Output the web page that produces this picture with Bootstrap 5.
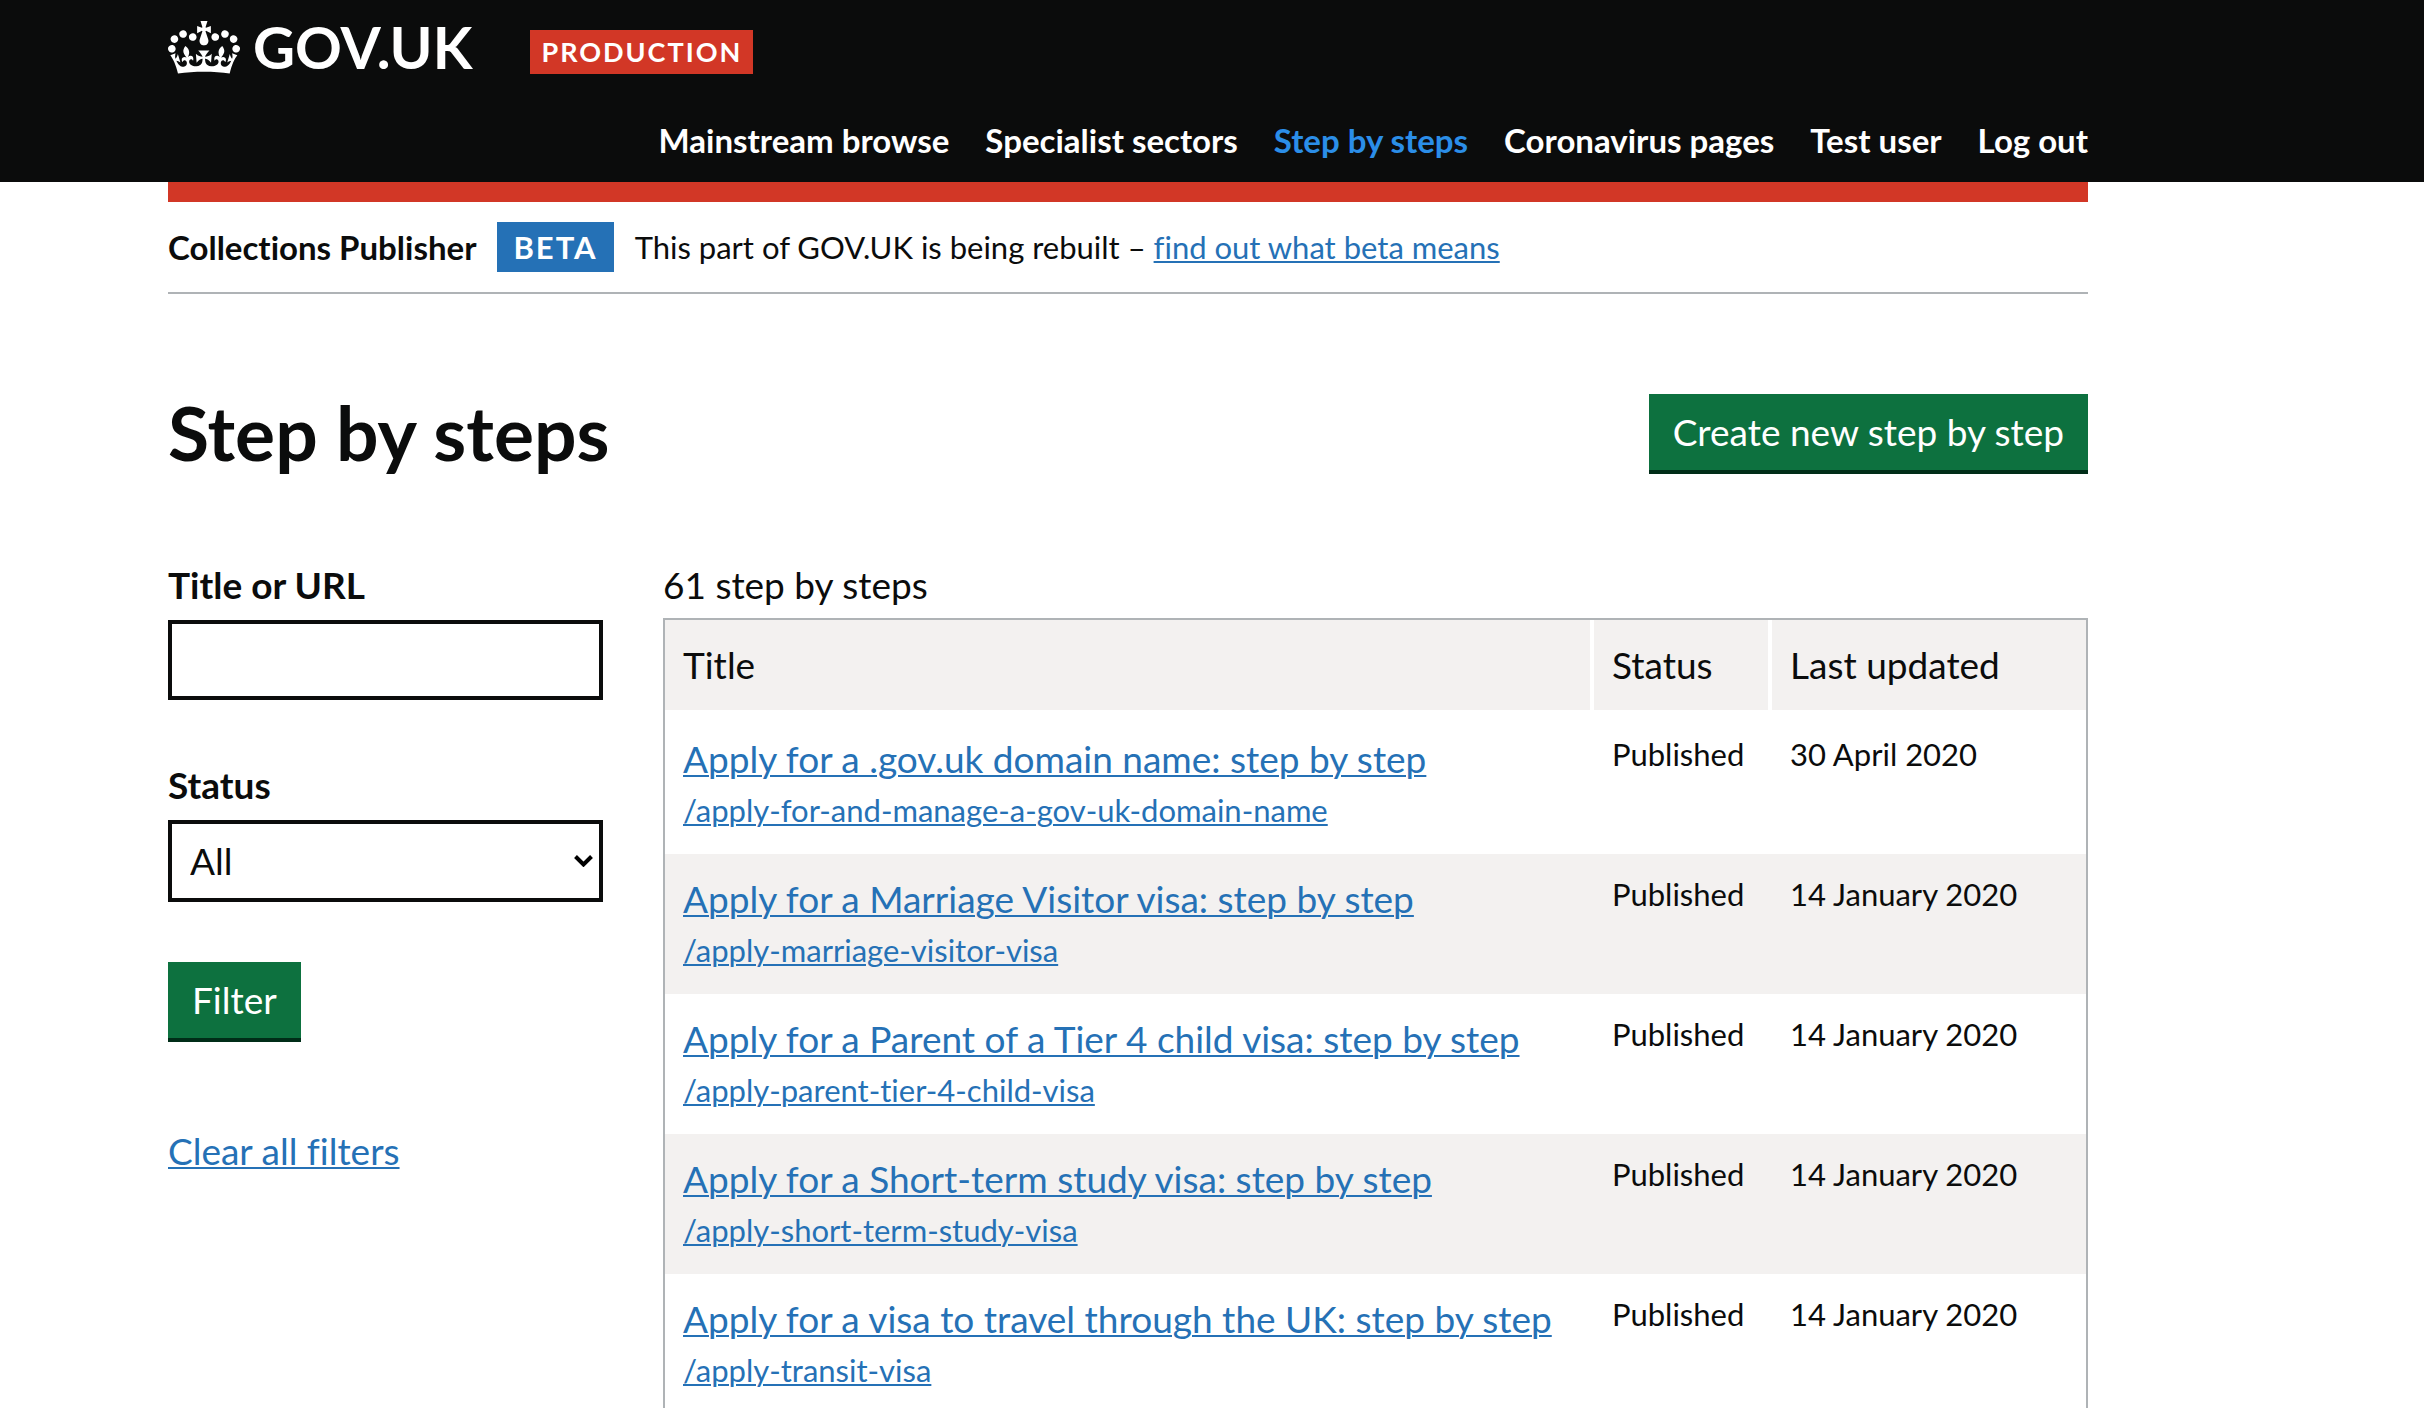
<!DOCTYPE html>
<html lang="en">
<head>
<meta charset="utf-8">
<meta name="viewport" content="width=device-width, initial-scale=1">
<title>Step by steps - Collections Publisher</title>
<link href="https://cdn.jsdelivr.net/npm/bootstrap@5.3.0/dist/css/bootstrap.min.css" rel="stylesheet">
<style>
:root { --ink: #0b0c0c; --link: #2571b6; --grey: #afb3b6; --pale: #f3f1f0; --red: #d23726; --green: #0d713f; }
body { font-family: Lato, "Liberation Sans", sans-serif; font-size: 37px; line-height: 50px; color: var(--ink); font-variant-ligatures: none; }
a { color: var(--link); text-underline-offset: 2px; text-decoration-thickness: 2px; }
.page-width { max-width: 1920px; margin-left: 168px; margin-right: 168px; }
.site-header { background: var(--ink); padding: 20px 0 22px; }
.site-brand { color: #fff; font-size: 58px; line-height: 54px; gap: 13px; }
.site-brand:hover { color: #fff; }
.crown { width: 72px; height: 53px; }
.env-tag { background: var(--red); font-size: 27px; line-height: 44px; letter-spacing: 2px; padding: 0 11px; margin-left: 58px; }
.site-nav { gap: 36px; font-size: 33px; line-height: 40px; margin-top: 46px; }
.site-nav .nav-link { padding: 0; color: #fff; }
.site-nav .nav-link.active { color: #2b8ee8; }
.red-bar { height: 20px; background: var(--red); }
.phase { border-bottom: 2px solid var(--grey); padding: 20px 0; font-size: 31px; line-height: 50px; gap: 21px; }
.phase-name { font-size: 33px; }
.phase-tag { background: var(--link); color: #fff; letter-spacing: 2px; padding: 0 16px; }
main { padding-top: 100px; }
h1 { font-size: 75px; line-height: 76px; }
.btn-go { --bs-btn-color: #fff; --bs-btn-bg: var(--green); --bs-btn-hover-color: #fff; --bs-btn-hover-bg: #005a30; font-size: 37px; line-height: 50px; padding: 13px 24px; border: 0; border-radius: 0; border-bottom: 4px solid #002d18; }
.results { padding-top: 86px; --bs-gutter-x: 60px; }
.group { margin-bottom: 60px; }
.group label { margin-bottom: 10px; }
.field { border: 4px solid var(--ink); border-radius: 0; font-size: 37px; line-height: 50px; padding: 11px 18px; color: var(--ink); }
.field-menu { padding: 12px 18px; background-position: right 6px center; background-size: 19px 12px; background-image: url("data:image/svg+xml,%3Csvg xmlns='http://www.w3.org/2000/svg' viewBox='0 0 19 12'%3E%3Cpath d='M1.5 1.5l8 8 8-8' fill='none' stroke='%23000' stroke-width='4'/%3E%3C/svg%3E"); }
.steps { border: 2px solid var(--grey); border-collapse: separate; border-spacing: 0; --bs-table-color: var(--ink); color: var(--ink); }
.steps caption { padding: 0 0 8px; color: var(--ink); }
.steps > :not(caption) > * > * { padding: 20px 18px; border: 0; box-shadow: none; }
.steps > tbody > tr > td { padding-bottom: 18px; }
.steps > tbody > tr:nth-child(even) > td { background: var(--pale); }
.steps > tbody > tr > td + td { padding-left: 22px; }
.steps > thead > tr > th { background: var(--pale); border-bottom: 4px solid #fff; }
.steps > thead > tr > th + th { border-left: 4px solid #fff; }
.steps a { display: block; width: fit-content; }
.minor { font-size: 31px; }
.steps a.minor { line-height: 52px; }
.steps td.minor { line-height: 40px; }
.col-state { width: 178px; }
.col-date { width: 318px; }
</style>
</head>
<body>
<header class="site-header">
  <div class="page-width">
    <div class="d-flex align-items-end">
      <a class="site-brand d-flex align-items-center fw-bold text-decoration-none" href="#">
        <svg class="crown" viewBox="0 0 132 97" aria-hidden="true"><path fill="currentColor" fill-rule="evenodd" d="M25 30.2c3.5 1.5 7.7-.2 9.1-3.7 1.5-3.6-.2-7.8-3.9-9.2-3.6-1.4-7.6.3-9.1 3.9-1.4 3.5.3 7.5 3.9 9zM9 39.5c3.6 1.5 7.8-.2 9.2-3.7 1.5-3.6-.2-7.8-3.9-9.1-3.6-1.5-7.6.2-9.1 3.8-1.4 3.5.3 7.5 3.8 9zM4.4 57.2c3.5 1.5 7.7-.2 9.1-3.8 1.5-3.6-.2-7.7-3.9-9.1-3.5-1.5-7.6.3-9.1 3.8-1.4 3.5.3 7.6 3.9 9.1zm38.3-21.4c3.5 1.5 7.7-.2 9.1-3.8 1.5-3.6-.2-7.7-3.9-9.1-3.6-1.5-7.6.3-9.1 3.8-1.3 3.6.4 7.7 3.9 9.1zm64.4-5.6c-3.6 1.5-7.8-.2-9.1-3.7-1.5-3.6.2-7.8 3.8-9.2 3.6-1.4 7.7.3 9.2 3.9 1.3 3.5-.4 7.5-3.9 9zm15.9 9.3c-3.6 1.5-7.7-.2-9.1-3.7-1.5-3.6.2-7.8 3.7-9.1 3.6-1.5 7.7.2 9.2 3.8 1.5 3.5-.3 7.5-3.8 9zm4.7 17.7c-3.6 1.5-7.8-.2-9.2-3.8-1.5-3.6.2-7.7 3.9-9.1 3.6-1.5 7.7.3 9.2 3.8 1.3 3.5-.4 7.6-3.9 9.1zM89.3 35.8c-3.6 1.5-7.8-.2-9.2-3.8-1.4-3.6.2-7.7 3.9-9.1 3.6-1.5 7.7.3 9.2 3.8 1.4 3.6-.3 7.7-3.9 9.1zM69.7 17.7l8.9 4.7V9.3l-8.9 2.8c-.2-.3-.5-.6-.9-.9L72.4 0H59.6l3.5 11.2c-.3.3-.6.5-.9.9l-8.8-2.8v13.1l8.8-4.7c.3.3.6.7.9.9l-5 15.4v.1c-.2.8-.4 1.6-.4 2.4 0 4.1 3.1 7.5 7 8.1h.2c.3 0 .7.1 1 .1.4 0 .7 0 1-.1h.2c4-.6 7.1-4.1 7.1-8.1 0-.8-.1-1.7-.4-2.4V34l-5.1-15.4c.4-.2.7-.6 1-.9zM66 92.8c16.9 0 32.8 1.1 47.1 3.2 4-16.9 8.9-26.7 14-33.5l-9.6-3.4c1 4.9 1.1 7.2 0 10.2-1.5-1.4-3-4.3-4.2-8.7L108.6 76c2.8-2 5-3.2 7.5-3.3-4.4 9.4-10 11.9-13.6 11.2-4.3-.8-6.3-4.6-5.6-7.9 1-4.7 5.7-5.9 8-.5 4.3-8.7-3-11.4-7.6-8.8 7.1-7.2 7.9-13.5 2.1-21.1-8 6.1-8.1 12.3-4.5 20.8-4.7-5.4-12.1-2.5-9.5 6.2 3.4-5.2 7.9-2 7.2 3.1-.6 4.3-6.4 7.8-13.5 7.2-10.3-.9-10.9-8-11.2-13.8 2.5-.5 7.1 1.8 11 7.3L80.2 60c-4.1 4.4-8 5.3-12.3 5.4 1.4-4.4 8-11.6 8-11.6H55.5s6.4 7.2 7.9 11.6c-4.2-.1-8-1-12.3-5.4l1.4 16.4c3.9-5.5 8.5-7.7 10.9-7.3-.3 5.8-.9 12.8-11.1 13.8-7.2.6-12.9-2.9-13.5-7.2-.7-5 3.8-8.3 7.1-3.1 2.7-8.7-4.6-11.6-9.4-6.2 3.7-8.5 3.6-14.7-4.6-20.8-5.8 7.6-5 13.9 2.2 21.1-4.7-2.6-11.9.1-7.7 8.8 2.3-5.5 7.1-4.2 8.1.5.7 3.3-1.3 7.1-5.7 7.9-3.5.7-9-1.8-13.5-11.2 2.5.1 4.7 1.3 7.5 3.3l-4.7-15.4c-1.2 4.4-2.7 7.2-4.3 8.7-1.1-3-.9-5.3 0-10.2l-9.5 3.4c5 6.9 9.9 16.7 14 33.5 14.8-2.1 30.8-3.2 47.7-3.2z"/></svg>
        <span>GOV.UK</span>
      </a>
      <span class="env-tag text-white fw-bold">PRODUCTION</span>
    </div>
    <nav class="site-nav nav justify-content-end fw-bold">
      <a class="nav-link" href="#">Mainstream browse</a>
      <a class="nav-link" href="#">Specialist sectors</a>
      <a class="nav-link active" aria-current="page" href="#">Step by steps</a>
      <a class="nav-link" href="#">Coronavirus pages</a>
      <a class="nav-link" href="#">Test user</a>
      <a class="nav-link" href="#">Log out</a>
    </nav>
  </div>
</header>
<div class="page-width">
  <div class="red-bar"></div>
  <div class="phase d-flex align-items-center">
    <strong class="phase-name">Collections Publisher</strong>
    <strong class="phase-tag">BETA</strong>
    <span>This part of GOV.UK is being rebuilt – <a href="#">find out what beta means</a></span>
  </div>
  <main>
    <div class="d-flex justify-content-between align-items-start">
      <h1 class="fw-bold m-0">Step by steps</h1>
      <button type="button" class="btn btn-go">Create new step by step</button>
    </div>
    <div class="row results">
      <form class="col-3">
        <div class="group">
          <label class="d-block fw-bold" for="title-or-url">Title or URL</label>
          <input class="form-control field" id="title-or-url" type="text">
        </div>
        <div class="group">
          <label class="d-block fw-bold" for="status">Status</label>
          <select class="form-select field field-menu" id="status"><option>All</option><option>Draft</option><option>Published</option></select>
        </div>
        <div class="group"><button type="submit" class="btn btn-go d-block">Filter</button></div>
        <a class="d-inline-block pt-4" href="#">Clear all filters</a>
      </form>
      <div class="col-9">
        <table class="table steps caption-top">
          <caption>61 step by steps</caption>
          <colgroup><col><col class="col-state"><col class="col-date"></colgroup>
          <thead><tr><th class="fw-normal" scope="col">Title</th><th class="fw-normal" scope="col">Status</th><th class="fw-normal" scope="col">Last updated</th></tr></thead>
          <tbody>
            <tr><td><a href="#">Apply for a .gov.uk domain name: step by step</a><a class="minor" href="#">/apply-for-and-manage-a-gov-uk-domain-name</a></td><td class="minor">Published</td><td class="minor">30 April 2020</td></tr>
            <tr><td><a href="#">Apply for a Marriage Visitor visa: step by step</a><a class="minor" href="#">/apply-marriage-visitor-visa</a></td><td class="minor">Published</td><td class="minor">14 January 2020</td></tr>
            <tr><td><a href="#">Apply for a Parent of a Tier 4 child visa: step by step</a><a class="minor" href="#">/apply-parent-tier-4-child-visa</a></td><td class="minor">Published</td><td class="minor">14 January 2020</td></tr>
            <tr><td><a href="#">Apply for a Short-term study visa: step by step</a><a class="minor" href="#">/apply-short-term-study-visa</a></td><td class="minor">Published</td><td class="minor">14 January 2020</td></tr>
            <tr><td><a href="#">Apply for a visa to travel through the UK: step by step</a><a class="minor" href="#">/apply-transit-visa</a></td><td class="minor">Published</td><td class="minor">14 January 2020</td></tr>
          </tbody>
        </table>
      </div>
    </div>
  </main>
</div>
<script src="https://cdn.jsdelivr.net/npm/bootstrap@5.3.0/dist/js/bootstrap.bundle.min.js"></script>
</body>
</html>
